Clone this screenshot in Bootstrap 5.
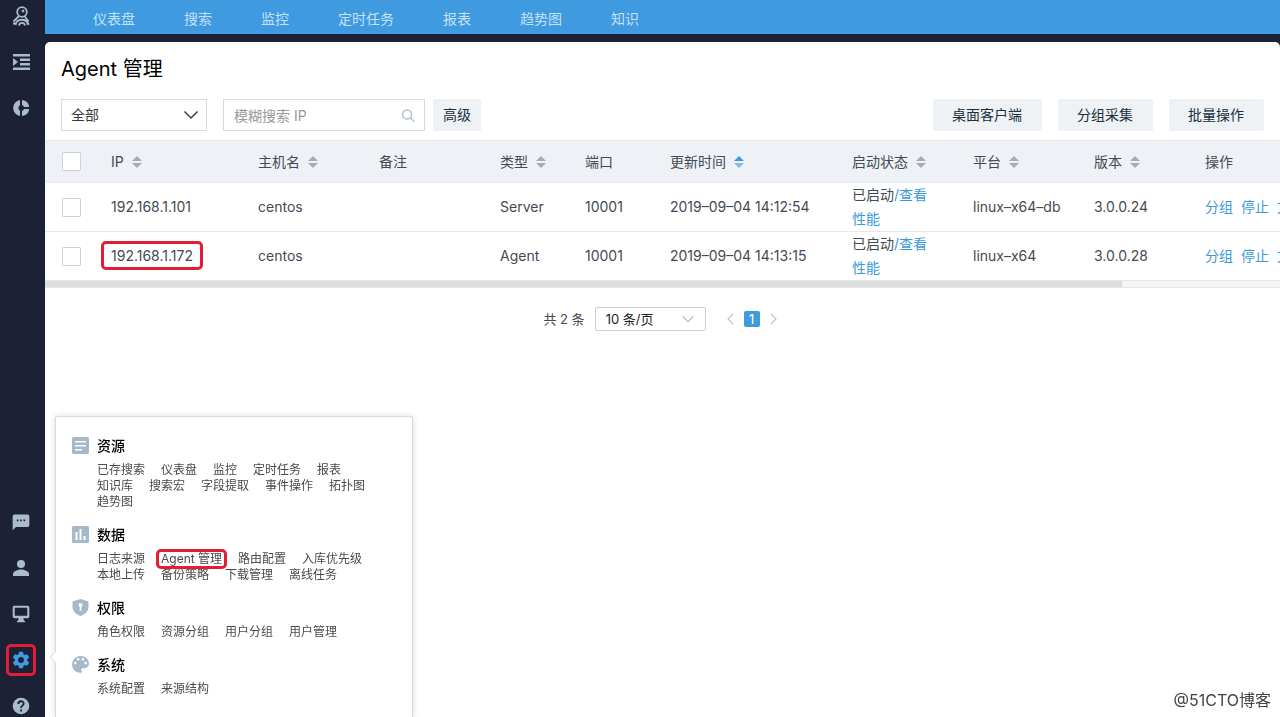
<!DOCTYPE html>
<html lang="zh-CN">
<head>
<meta charset="utf-8">
<meta name="viewport" content="width=device-width, initial-scale=1">
<title>Agent 管理</title>
<link rel="stylesheet" href="https://cdn.jsdelivr.net/npm/bootstrap@5.3.0/dist/css/bootstrap.min.css">
<style>
  :root { --ink: #444a52; --brand: #3f9ae0; --navy: #1c2136; --steel: #a9bccb; --red: #e01f36; --line: #d5dade; }
  body { font-family: Inter, "Noto Sans CJK SC", sans-serif; font-size: 14px; line-height: 24px; color: var(--ink); background: var(--navy); }
  a { color: #3b9ad9; text-decoration: none; }
  .side { width: 45px; flex: none; background: var(--navy); padding: 6px 0 1px 11px; }
  .side-group { gap: 26px; }
  .side button { width: 20px; height: 20px; padding: 0; border: 0; background: none; color: var(--steel); display: block; position: relative; }
  .side svg { display: block; }
  .side button.on { color: var(--brand); }
  .framed { position: relative; }
  .framed::after { content: ""; position: absolute; border: 3px solid var(--red); border-radius: 5px; inset: -2px -5px; }
  .side .framed::after { inset: -6px -5px; }
  .framed.cell-frame::after { inset: -6px -10px; }
  .top-nav { background: var(--brand); height: 34px; padding-left: 48px; gap: 49px; margin-bottom: 8px; line-height: 20px; padding-top: 9px; }
  .top-nav a { color: #c4e1f7; padding: 0; }
  .sheet { background: #fff; border-radius: 5px 5px 0 0; }
  h1 { font-size: 20px; line-height: 24px; color: #000; font-weight: 400; margin: 0; padding: 15px 16px; }
  .tools { padding: 3px 16px 9px; }
  .tools .form-select, .tools .form-control { height: 32px; border: 1px solid var(--line); border-radius: 0; font-size: 14px; line-height: 20px; padding: 5px 9px; color: #33393f; box-shadow: none; }
  .tools .form-select { width: 146px; appearance: none; background: none; }
  .pick svg { position: absolute; pointer-events: none; right: 8px; top: 10px; }
  .tools .form-control { width: 202px; padding: 4px 10px; }
  .tools .form-control + svg { right: 10px; }
  .tools .form-control::placeholder { color: #999; }
  .btn-soft { height: 32px; border: 0; border-radius: 2px; background: #eef2f5; color: #202d3b; font-size: 14px; line-height: 20px; padding: 6px 20px 6px 19px; }
  .btn-soft.tight { padding: 6px 10px; }
  .grid-wrap { overflow: hidden; }
  .agents { table-layout: fixed; width: 1416px; margin: 0; color: var(--ink); }
  .agents th, .agents td { padding: 0 20px 0 17px; vertical-align: middle; text-align: left; }
  .agents .acts { padding-right: 0; white-space: nowrap; }
  .agents th { font-weight: 400; height: 42px; background: #eef2f7; border-top: 1px solid #e6e8ea; border-bottom: 1px solid #e8eaf2; white-space: nowrap; padding-right: 0; }
  .agents td { height: 49px; border-bottom: 1px solid #e3e8eb; }
  .agents .form-check-input { width: 19px; height: 19px; border: 1px solid #ced3d8; border-radius: 1px; margin: 0; display: block; }
  .sorter { margin-left: 8px; color: #a6abb8; fill: currentColor; vertical-align: -1px; }
  .sorter.up { color: #8fb9dc; }
  .sorter.up path:first-child { fill: var(--brand); }
  .acts a { margin-right: 8px; }
  .track { height: 7px; background: #f5f5f5; border-bottom: 1px solid #e8e8e8; }
  .thumb { height: 6px; background: #dcdedd; }
  .pager { padding-top: 19px; font-size: 13px; line-height: 24px; }
  .pager label { margin-right: 10px; }
  .pager .form-select { width: 111px; height: 24px; padding: 0 10px; font-size: 13px; line-height: 20px; border: 1px solid #c9d0da; border-radius: 2px; background: none; color: #222; }
  .pager .pick svg { top: 7px; right: 11px; }
  .pager button { border: 0; background: none; padding: 0; width: 16px; height: 16px; line-height: 16px; font-size: 13px; display: block; }
  .pager button.now { background: #3f9bd9; color: #fff; border-radius: 2px; margin: 0 6px; }
  .pager button svg { display: block; margin: auto; }
  .flyout { position: fixed; left: 55px; bottom: 0; width: 358px; height: 301px; background: #fff; border: 1px solid #d6d9dc; border-bottom: 0; border-radius: 3px 3px 0 0; box-shadow: 0 0 6px rgba(0,0,0,.14); padding: 17px 16px 0; }
  .flyout::before { content: ""; position: absolute; left: -5px; bottom: 56px; width: 8px; height: 8px; background: #fff; border: solid #dfe2e5; border-width: 0 0 1px 1px; transform: rotate(45deg); }
  .flyout section { display: flex; gap: 8px; margin-bottom: 13px; color: #a5b9ca; }
  .flyout section > svg { flex: none; margin-top: 3px; }
  .flyout h2 { font-size: 14px; line-height: 24px; color: #000; font-weight: 500; margin: 0 0 4px; }
  .links { display: flex; flex-wrap: wrap; column-gap: 16px; width: 285px; font-size: 12px; line-height: 16px; }
  .links a { color: #4a4a4a; }
  .sign { position: fixed; right: 9px; bottom: 5px; color: #444; font-size: 16px; line-height: 24px; text-shadow: 0 0 2px #fff; }
</style>
</head>
<body class="vh-100 overflow-hidden">
<svg width="0" height="0" class="position-absolute" aria-hidden="true">
  <symbol id="sort" viewBox="0 0 10 12"><path d="M5 0l5 5H0z"/><path d="M0 7h10l-5 5z"/></symbol>
  <symbol id="chev" viewBox="0 0 16 12"><path d="M1.500 2.500L8 9l6.500-6.500" fill="none" stroke="currentColor" stroke-width="1.500"/></symbol>
</svg>
<div class="d-flex h-100">
  <aside class="side d-flex flex-column justify-content-between">
    <div class="side-group d-flex flex-column">
      <button type="button" aria-label="首页"><svg width="20" height="20" viewBox="0 0 20 20" fill="none" stroke="currentColor" stroke-width="1.800"><circle cx="11" cy="6" r="4.800"/><circle cx="12" cy="5" r="1" fill="currentColor" stroke-width="1"/><path d="M8 10L2.500 15.500M13.500 10l4 5.500M4.500 19c1-7 11.500-7 13 0M8 19.500c.500-3.500 5.500-3.500 6 0M2 17.500h3M15.500 17.500h2.500"/></svg></button>
      <button type="button" aria-label="目录"><svg width="20" height="20" viewBox="0 0 20 20" fill="currentColor"><path d="M2 2h17v2.500H2zM9 6.500h10V9H9zM9 11h10v2.500H9zM2 15.500h17V18H2zM2 6l5 4-5 4z"/></svg></button>
      <button type="button" aria-label="统计"><svg width="20" height="20" viewBox="0 0 20 20" fill="currentColor"><path d="M9 2v5.200A3.200 3.200 0 0 0 9 12.800V18A8.100 8.100 0 0 1 9 2zM11 2a8.100 8.100 0 0 1 7.200 7H13a3.200 3.200 0 0 0-2-2zM13 11h5.200A8.100 8.100 0 0 1 11 18v-5a3.200 3.200 0 0 0 2-2z"/></svg></button>
    </div>
    <div class="side-group d-flex flex-column">
      <button type="button" aria-label="消息"><svg width="20" height="20" viewBox="0 0 24 24" fill="currentColor"><path d="M20 3H4a2 2 0 0 0-2 2v17l4-4h14a2 2 0 0 0 2-2V5a2 2 0 0 0-2-2zM9 11H7V9h2zm4 0h-2V9h2zm4 0h-2V9h2z"/></svg></button>
      <button type="button" aria-label="用户"><svg width="20" height="20" viewBox="0 0 20 20" fill="currentColor"><circle cx="10" cy="6" r="4"/><path d="M2 18v-2c0-3 5.300-4.500 8-4.500s8 1.500 8 4.500v2z"/></svg></button>
      <button type="button" aria-label="显示"><svg width="20" height="20" viewBox="0 0 24 24" fill="currentColor"><path d="M20 2H4a2 2 0 0 0-2 2v11a2 2 0 0 0 2 2h5v2l-2 2v1h10v-1l-2-2v-2h5a2 2 0 0 0 2-2V4a2 2 0 0 0-2-2zm-.500 12h-15V4.500h15z"/></svg></button>
      <button type="button" class="on framed" aria-label="设置"><svg width="20" height="20" viewBox="0 0 24 24" fill="currentColor"><path d="M19.430 12.980c.040-.320.070-.640.070-.980s-.030-.660-.070-.980l2.110-1.650c.190-.150.240-.420.120-.640l-2-3.460c-.120-.220-.390-.300-.610-.220l-2.490 1c-.520-.400-1.080-.730-1.690-.980l-.380-2.650A.488.488 0 0 0 14 2h-4c-.250 0-.460.180-.490.420l-.380 2.650c-.610.250-1.170.590-1.690.980l-2.490-1c-.230-.090-.490 0-.610.220l-2 3.460c-.130.220-.070.490.120.640l2.110 1.650c-.040.320-.070.650-.070.980s.030.660.070.980l-2.110 1.650c-.190.150-.240.420-.120.640l2 3.460c.120.220.390.300.610.220l2.490-1c.520.400 1.080.730 1.690.980l.380 2.650c.030.240.240.420.490.420h4c.250 0 .460-.180.490-.420l.380-2.650c.610-.250 1.170-.590 1.690-.980l2.490 1c.230.090.490 0 .610-.220l2-3.460c.120-.220.070-.490-.120-.640zM12 15.500a3.500 3.500 0 1 1 0-7 3.500 3.500 0 0 1 0 7z"/></svg></button>
      <button type="button" aria-label="帮助"><svg width="20" height="20" viewBox="0 0 20 20"><circle cx="10" cy="10" r="8.300" fill="currentColor"/><path d="M7.300 8c0-3.800 5.600-3.500 5.400-.300C12.600 9.700 10 9.700 10 12M10 13.500v2" fill="none" stroke="#1c2136" stroke-width="1.800"/></svg></button>
    </div>
  </aside>
  <div class="flex-grow-1 d-flex flex-column overflow-hidden">
    <nav class="top-nav nav flex-nowrap">
      <a href="#">仪表盘</a><a href="#">搜索</a><a href="#">监控</a><a href="#">定时任务</a><a href="#">报表</a><a href="#">趋势图</a><a href="#">知识</a>
    </nav>
    <main class="sheet flex-grow-1">
      <h1>Agent 管理</h1>
      <div class="tools d-flex align-items-center">
        <div class="pick position-relative me-3"><select class="form-select" aria-label="分组"><option>全部</option></select><svg width="16" height="12" color="#3c4248"><use href="#chev"/></svg></div>
        <div class="pick position-relative me-2"><input class="form-control" type="text" placeholder="模糊搜索 IP" aria-label="模糊搜索 IP"><svg width="14" height="14" viewBox="0 0 14 14" fill="none" stroke="#b4c2cc" stroke-width="1.500"><circle cx="6" cy="5.500" r="4.500"/><path d="M9.300 8.700l4 4"/></svg></div>
        <button type="button" class="btn btn-soft tight">高级</button>
        <div class="ms-auto d-flex gap-3"><button type="button" class="btn btn-soft">桌面客户端</button><button type="button" class="btn btn-soft">分组采集</button><button type="button" class="btn btn-soft">批量操作</button></div>
      </div>
      <div class="grid-wrap">
        <table class="agents">
          <colgroup><col width="49"><col width="147"><col width="121"><col width="121"><col width="85"><col width="85"><col width="182"><col width="121"><col width="121"><col width="111"><col width="273"></colgroup>
          <thead><tr>
            <th><input class="form-check-input" type="checkbox" aria-label="全选"></th>
            <th>IP<svg class="sorter" width="10" height="12"><use href="#sort"/></svg></th>
            <th>主机名<svg class="sorter" width="10" height="12"><use href="#sort"/></svg></th>
            <th>备注</th>
            <th>类型<svg class="sorter" width="10" height="12"><use href="#sort"/></svg></th>
            <th>端口</th>
            <th>更新时间<svg class="sorter up" width="10" height="12" viewBox="0 0 10 12"><path d="M5 0l5 5H0z"/><path d="M0 7h10l-5 5z"/></svg></th>
            <th>启动状态<svg class="sorter" width="10" height="12"><use href="#sort"/></svg></th>
            <th>平台<svg class="sorter" width="10" height="12"><use href="#sort"/></svg></th>
            <th>版本<svg class="sorter" width="10" height="12"><use href="#sort"/></svg></th>
            <th>操作</th>
          </tr></thead>
          <tbody>
            <tr><td><input class="form-check-input" type="checkbox" aria-label="选择 192.168.1.101"></td><td>192.168.1.101</td><td>centos</td><td></td><td>Server</td><td>10001</td><td class="pe-0">2019–09–04 14:12:54</td><td>已启动<a href="#">/查看性能</a></td><td class="pe-0">linux–x64–db</td><td>3.0.0.24</td><td class="acts"><a href="#">分组</a><a href="#">停止</a><a href="#">文件</a></td></tr>
            <tr><td><input class="form-check-input" type="checkbox" aria-label="选择 192.168.1.172"></td><td><span class="framed cell-frame">192.168.1.172</span></td><td>centos</td><td></td><td>Agent</td><td>10001</td><td class="pe-0">2019–09–04 14:13:15</td><td>已启动<a href="#">/查看性能</a></td><td class="pe-0">linux–x64</td><td>3.0.0.28</td><td class="acts"><a href="#">分组</a><a href="#">停止</a><a href="#">文件</a></td></tr>
          </tbody>
        </table>
      </div>
      <div class="track"><div class="thumb" style="width:87.2%"></div></div>
      <div class="pager d-flex justify-content-center align-items-center">
        <label for="per">共 2 条</label>
        <div class="pick position-relative me-3"><select id="per" class="form-select"><option>10 条/页</option></select><svg width="14" height="10" color="#b9c0c8"><use href="#chev"/></svg></div>
        <button type="button" aria-label="上一页"><svg width="8" height="12" fill="none" stroke="#bcc3ca" stroke-width="1.200"><path d="M7 1L2 6l5 5"/></svg></button>
        <button type="button" class="now">1</button>
        <button type="button" aria-label="下一页"><svg width="8" height="12" fill="none" stroke="#bcc3ca" stroke-width="1.200"><path d="M1 1l5 5-5 5"/></svg></button>
      </div>
    </main>
  </div>
</div>
<div class="flyout">
  <section><svg width="17" height="17" viewBox="0 0 17 17" fill="currentColor"><path fill-rule="evenodd" d="M1.500 0h14A1.500 1.500 0 0 1 17 1.500v14a1.500 1.500 0 0 1-1.500 1.500h-14A1.500 1.500 0 0 1 0 15.500v-14A1.500 1.500 0 0 1 1.500 0zM3 4v1.500h11V4zm0 4v1.500h11V8zm0 4v1.500h7V12z"/></svg>
    <div><h2>资源</h2><div class="links"><a href="#">已存搜索</a><a href="#">仪表盘</a><a href="#">监控</a><a href="#">定时任务</a><a href="#">报表</a><a href="#">知识库</a><a href="#">搜索宏</a><a href="#">字段提取</a><a href="#">事件操作</a><a href="#">拓扑图</a><a href="#">趋势图</a></div></div></section>
  <section><svg width="17" height="17" viewBox="0 0 17 17" fill="currentColor"><path fill-rule="evenodd" d="M1.500 0h14A1.500 1.500 0 0 1 17 1.500v14a1.500 1.500 0 0 1-1.500 1.500h-14A1.500 1.500 0 0 1 0 15.500v-14A1.500 1.500 0 0 1 1.500 0zM3.500 6v8h2V6zm4-3v11h2V3zm4 7v4h2v-4z"/></svg>
    <div><h2>数据</h2><div class="links"><a href="#">日志来源</a><a href="#" class="framed">Agent 管理</a><a href="#">路由配置</a><a href="#">入库优先级</a><a href="#">本地上传</a><a href="#">备份策略</a><a href="#">下载管理</a><a href="#">离线任务</a></div></div></section>
  <section><svg width="17" height="17" viewBox="0 0 17 17"><path fill="currentColor" d="M8.500 0L16.500 2.500V8c0 4-3.500 7.500-8 9-4.500-1.500-8-5-8-9V2.500z"/><circle cx="8.500" cy="6" r="2" fill="#fff"/><path stroke="#fff" stroke-width="1.600" d="M8.500 6v6"/></svg>
    <div><h2>权限</h2><div class="links"><a href="#">角色权限</a><a href="#">资源分组</a><a href="#">用户分组</a><a href="#">用户管理</a></div></div></section>
  <section><svg width="17" height="17" viewBox="3 3 18 18" fill="currentColor"><path d="M12 3a9 9 0 0 0 0 18c.830 0 1.500-.670 1.500-1.500 0-.390-.150-.740-.390-1.010-.230-.260-.380-.610-.380-.990 0-.830.670-1.500 1.500-1.500H16c2.760 0 5-2.240 5-5 0-4.420-4.030-8-9-8zm-5.500 9a1.500 1.500 0 1 1 0-3 1.500 1.500 0 0 1 0 3zm3-4a1.500 1.500 0 1 1 0-3 1.500 1.500 0 0 1 0 3zm5 0a1.500 1.500 0 1 1 0-3 1.500 1.500 0 0 1 0 3zm3 4a1.500 1.500 0 1 1 0-3 1.500 1.500 0 0 1 0 3z"/></svg>
    <div><h2>系统</h2><div class="links"><a href="#">系统配置</a><a href="#">来源结构</a></div></div></section>
</div>
<div class="sign">@51CTO博客</div>
<script src="https://cdn.jsdelivr.net/npm/bootstrap@5.3.0/dist/js/bootstrap.bundle.min.js"></script>
</body>
</html>
